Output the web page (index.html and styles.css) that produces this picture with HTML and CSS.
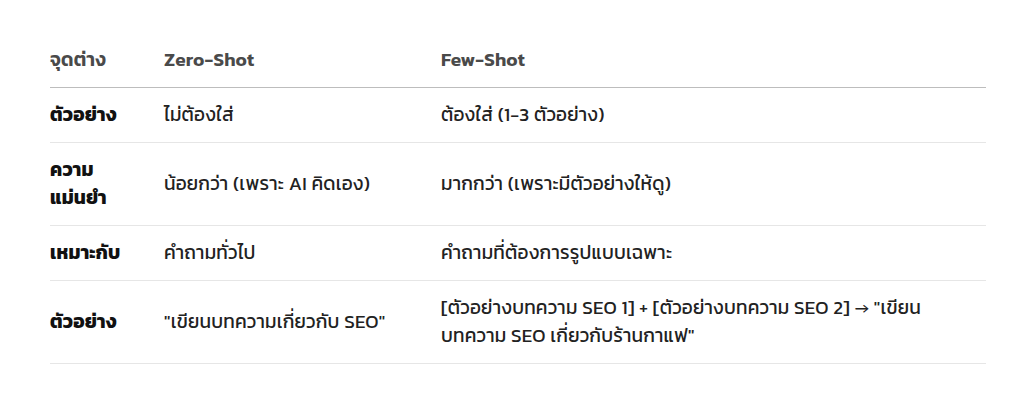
FILE: index.html
```html
<!DOCTYPE html>
<html lang="th">
<head>
  <meta charset="UTF-8" />
  <meta name="viewport" content="width=device-width, initial-scale=1.0"/>
  <title>Zero-Shot vs Few-Shot</title>
  <link rel="stylesheet" href="styles.css">
</head>
<body>
  <div class="wrap">
    <table class="compare">
      <colgroup>
        <col class="col-key" />
        <col class="col-zero" />
        <col class="col-few" />
      </colgroup>
      <thead>
        <tr>
          <th>จุดต่าง</th>
          <th>Zero-Shot</th>
          <th>Few-Shot</th>
        </tr>
      </thead>
      <tbody>
        <tr>
          <td class="key">ตัวอย่าง</td>
          <td>ไม่ต้องใส่</td>
          <td>ต้องใส่ (1-3 ตัวอย่าง)</td>
        </tr>
        <tr>
          <td class="key">ความ<br>แม่นยำ</td>
          <td>น้อยกว่า (เพราะ AI คิดเอง)</td>
          <td>มากกว่า (เพราะมีตัวอย่างให้ดู)</td>
        </tr>
        <tr>
          <td class="key">เหมาะกับ</td>
          <td>คำถามทั่วไป</td>
          <td>คำถามที่ต้องการรูปแบบเฉพาะ</td>
        </tr>
        <tr>
          <td class="key">ตัวอย่าง</td>
          <td>"เขียนบทความเกี่ยวกับ SEO"</td>
          <td>[ตัวอย่างบทความ SEO 1] + [ตัวอย่างบทความ SEO 2] → "เขียน บทความ SEO เกี่ยวกับร้านกาแฟ"</td>
        </tr>
      </tbody>
    </table>
  </div>
</body>
</html>
```

FILE: styles.css
```css
body {
  margin: 0;
  background: #fff;
  font-family: "Kanit", "Prompt", "Noto Sans Thai", "Noto Sans", sans-serif;
  color: #222;
}

.wrap {
  padding: 33px 47px 0 50px;
}

.compare {
  width: 936px;
  border-collapse: collapse;
  table-layout: fixed;
  font-size: 19px;
  line-height: 28px;
  letter-spacing: 0.2px;
}

.col-key { width: 114px; }
.col-zero { width: 277px; }
.col-few { width: 545px; }

th, td {
  text-align: left;
  vertical-align: middle;
  padding: 13px 40px 13px 0;
}

th {
  font-weight: 600;
  color: #4a4a4a;
  border-bottom: 1px solid #bdbdbd;
}

td {
  border-bottom: 1px solid #e6e6e6;
}

td.key {
  font-weight: 700;
  color: #111;
}
```
